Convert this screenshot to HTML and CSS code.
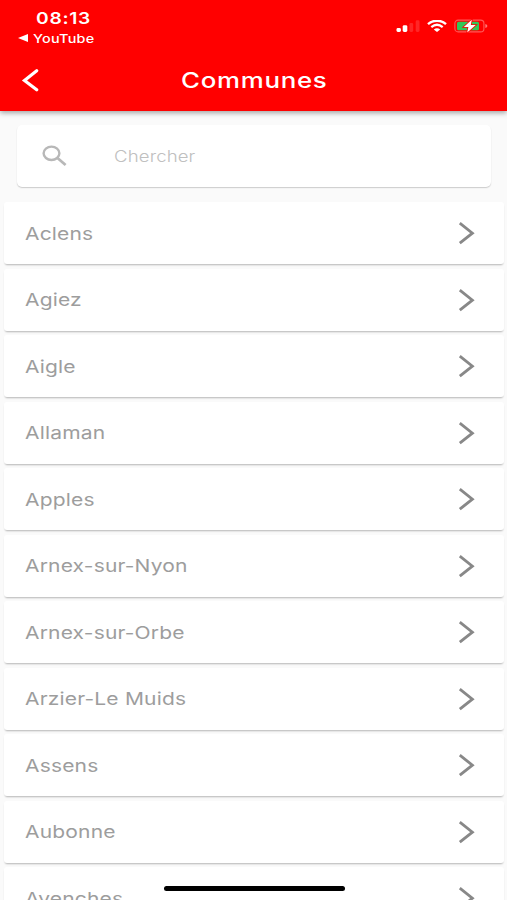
FILE: index.html
```
<!DOCTYPE html>
<html lang="fr">

    <head>
        <meta charset="utf-8">
        <title>Communes</title>
        <link rel="stylesheet" href="styles.css">
    </head>

    <body>

        <header class="header">

            <div class="status-bar">
                <div class="status-left">
                    <div class="time"><span class="wide">08:13</span></div>
                    <div class="back-app">
                        <svg class="back-app-icon" viewBox="0 0 10 8"><path d="M0 4 L10 0 V8 Z" fill="#fff"/></svg>
                        <span class="wide">YouTube</span>
                    </div>
                </div>
                <div class="status-icons">
                    <svg class="signal" viewBox="0 0 24 12">
                        <rect x="0.5" y="8" width="4.4" height="4" rx="1.4" fill="#fff"/>
                        <rect x="6.7" y="5.2" width="4.6" height="6.8" rx="1.4" fill="#fff"/>
                        <rect x="13.4" y="3" width="3.8" height="9" rx="1.4" fill="#fff" opacity="0.15"/>
                        <rect x="19.7" y="0.3" width="3.8" height="11.7" rx="1.4" fill="#fff" opacity="0.15"/>
                    </svg>
                    <svg class="wifi" viewBox="0 0 20 12">
                        <path d="M1 4.2 C6 -0.4 14 -0.4 19 4.2" fill="none" stroke="#fff" stroke-width="2.4"/>
                        <path d="M4.3 7.2 C7.8 4.2 12.2 4.2 15.7 7.2" fill="none" stroke="#fff" stroke-width="2.2"/>
                        <path d="M6.8 9.4 C8.8 7.8 11.2 7.8 13.2 9.4 L10 12 Z" fill="#fff"/>
                    </svg>
                    <svg class="battery" viewBox="0 0 34 14">
                        <rect x="0.9" y="1.1" width="29" height="11.8" rx="3.2" fill="none" stroke="#ff5858" stroke-width="1.1"/>
                        <path d="M31.3 5 Q33.4 5.4 33.4 7 Q33.4 8.6 31.3 9 Z" fill="#ff7676"/>
                        <rect x="3" y="2.8" width="22" height="8.4" rx="1.5" fill="#34c759"/>
                        <path d="M17.8 0.8 L9.8 8 H14.4 L13.2 13.4 L21.8 6 H16.8 Z" fill="#fff" stroke="#f00" stroke-width="1.6" paint-order="stroke"/>
                    </svg>
                </div>
            </div>

            <div class="nav-bar">
                <svg class="back-button" viewBox="0 0 18 24"><path d="M15.7 2.8 L3.5 12.4 L15.7 21.8" fill="none" stroke="#fff" stroke-width="3.2" stroke-linecap="round"/></svg>
                <h1 class="title"><span class="wide">Communes</span></h1>
            </div>

        </header>

        <div class="search-box">
            <svg class="search-icon" viewBox="0 0 26 22">
                <ellipse cx="9.5" cy="8.3" rx="7.9" ry="6.7" fill="none" stroke="#b8b8b8" stroke-width="2.4"/>
                <path d="M15.2 12.8 L23.6 20" stroke="#b8b8b8" stroke-width="2.8"/>
            </svg>
            <span class="placeholder wide">Chercher</span>
        </div>

        <ul class="list js-list"></ul>

        <div class="home-indicator"></div>

        <script>

            const communes = [
                'Aclens',
                'Agiez',
                'Aigle',
                'Allaman',
                'Apples',
                'Arnex-sur-Nyon',
                'Arnex-sur-Orbe',
                'Arzier-Le Muids',
                'Assens',
                'Aubonne',
                'Avenches'
            ];

            let listHTML = '';

            communes.forEach((name) => {
                listHTML += `
                    <li class="item">
                        <span class="wide">${name}</span>
                        <svg class="chevron" viewBox="0 0 18 24"><path d="M1.8 2.2 L14.4 12.2 L1.8 22.2" fill="none" stroke="#888" stroke-width="2.8"/></svg>
                    </li>`;
            });

            document.querySelector('.js-list').innerHTML = listHTML;

        </script>

    </body>

</html>
```
FILE: styles.css
```
* {
    box-sizing: border-box;
}

body {
    margin: 0;
    height: 900px;
    overflow: hidden;
    background-color: #fafafa;
    font-family: Inter, "Liberation Sans", sans-serif;
}

/* letters are wider than the font draws them */
.wide {
    display: inline-block;
    transform: scaleX(1.2);
    transform-origin: left center;
    white-space: nowrap;
}

.header {
    height: 111px;
    background-color: #ff0000;
    color: white;
    box-shadow: 0 2px 5px rgba(0,0,0,0.35);
}

.status-bar {
    display: flex;
    justify-content: space-between;
    height: 50px;
    padding: 8px 19px 0 18px;
}

.time {
    padding-left: 18px;
    font-size: 16px;
    line-height: 20px;
    font-weight: 600;
    letter-spacing: 0.6px;
}

.back-app {
    display: flex;
    align-items: center;
    gap: 5px;
    height: 20px;
    font-size: 12px;
    font-weight: 500;
    letter-spacing: 0.2px;
}

.back-app-icon {
    width: 10px;
    height: 8px;
}

.status-icons {
    display: flex;
    padding-top: 11px;
}

.signal {
    width: 24px;
    height: 12px;
    margin-top: 1px;
    margin-right: 7px;
}

.wifi {
    width: 20px;
    height: 12px;
    margin-top: 1px;
    margin-right: 7px;
}

.battery {
    width: 34px;
    height: 14px;
}

.nav-bar {
    display: flex;
    align-items: center;
    height: 60px;
    padding-left: 21px;
}

.back-button {
    width: 18px;
    height: 24px;
}

.title {
    margin: 0 0 0 142px;
    font-size: 21px;
    font-weight: 550;
    letter-spacing: 0.6px;
}

.title .wide {
    transform: scaleX(1.23);
}

.search-box {
    display: flex;
    align-items: center;
    height: 62px;
    margin: 14px 16px 0 17px;
    padding: 0 25px;
    background-color: white;
    border-radius: 5px;
    box-shadow: 0 1px 1px rgba(0,0,0,0.14), 0 1px 2px rgba(0,0,0,0.06);
}

.search-icon {
    width: 26px;
    height: 22px;
}

.placeholder {
    margin-left: 46px;
    color: #c0c0c0;
    font-size: 15.5px;
    font-weight: 300;
    letter-spacing: 0.1px;
}

.list {
    display: flex;
    flex-direction: column;
    gap: 4.5px;
    margin: 15px 3px 0 4px;
    padding: 0;
    list-style: none;
}

.item {
    display: flex;
    flex-shrink: 0;
    align-items: center;
    justify-content: space-between;
    height: 62px;
    padding: 0 28px 0 21px;
    background-color: white;
    border-radius: 3px;
    box-shadow: 0 2px 2px -1px rgba(0,0,0,0.25), 0 1px 2px rgba(0,0,0,0.03);
    color: #9d9d9d;
    font-size: 17.5px;
    letter-spacing: 0.15px;
}

.chevron {
    width: 18px;
    height: 24px;
}

.home-indicator {
    position: absolute;
    left: 164px;
    top: 886px;
    width: 181px;
    height: 5px;
    border-radius: 3px;
    background-color: black;
}
```
